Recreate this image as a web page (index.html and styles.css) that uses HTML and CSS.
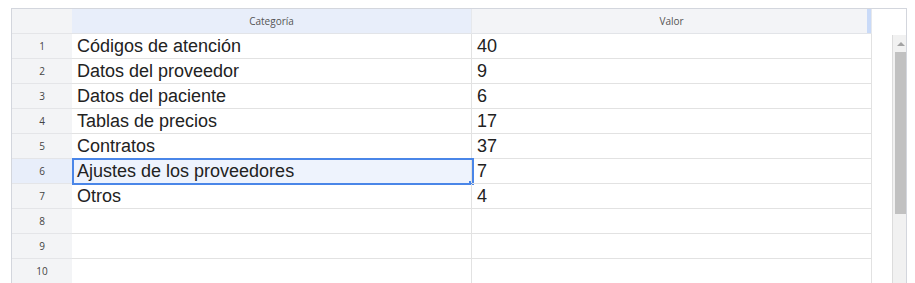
FILE: index.html
```html
<!DOCTYPE html>
<html>
<head lang="es">
    <meta charset="UTF-8">
    <title>Hoja de datos</title>
    <link rel="stylesheet" href="styles.css">
</head>
<body>
<div class="sheet">
    <div class="grid">
        <div class="corner"></div>
        <div class="colhead selected">Categoría</div>
        <div class="colhead last">Valor</div>

        <div class="rownum">1</div><div class="cell">Códigos de atención</div><div class="cell">40</div>
        <div class="rownum">2</div><div class="cell">Datos del proveedor</div><div class="cell">9</div>
        <div class="rownum">3</div><div class="cell">Datos del paciente</div><div class="cell">6</div>
        <div class="rownum">4</div><div class="cell">Tablas de precios</div><div class="cell">17</div>
        <div class="rownum">5</div><div class="cell">Contratos</div><div class="cell">37</div>
        <div class="rownum selected">6</div><div class="cell active">Ajustes de los proveedores</div><div class="cell">7</div>
        <div class="rownum">7</div><div class="cell">Otros</div><div class="cell">4</div>
        <div class="rownum">8</div><div class="cell"></div><div class="cell"></div>
        <div class="rownum">9</div><div class="cell"></div><div class="cell"></div>
        <div class="rownum">10</div><div class="cell"></div><div class="cell"></div>
    </div>
    <!-- barra de scroll -->
    <div class="side">
        <div class="vscroll">
            <div class="arrow"></div>
            <div class="thumb"></div>
        </div>
    </div>
</div>
</body>
</html>
```
FILE: styles.css
```css
* {
    margin: 0;
    padding: 0;
    box-sizing: border-box;
}
html, body {
    height: 283px;
    overflow: hidden;
    background: #fff;
}
body {
    padding: 8px 0 0 11px;
}
/*表格*/
.sheet {
    display: flex;
    width: 896px;
    border: 1px solid #d3d6dd;
    border-bottom: none;
}
.grid {
    display: grid;
    grid-template-columns: 60px 400px 400px;
    grid-auto-rows: 25px;
}
.corner, .rownum {
    background: #f3f4f6;
    border-bottom: 1px solid #e4e5e8;
}
.colhead {
    font: 10px/24px "Open Sans", "Noto Sans", sans-serif;
    color: #555;
    text-align: center;
    background: #f3f4f7;
    border-right: 1px solid #e6e8ec;
    border-bottom: 1px solid #e2e4e8;
}
.colhead.selected {
    background: #e8eefa;
}
.colhead.last {
    box-shadow: inset -4px 0 #c9daf8;
}
.rownum {
    font: 10px/24px "Open Sans", "Noto Sans", sans-serif;
    color: #444;
    text-align: center;
}
.rownum.selected {
    background: #e8eefa;
}
.cell {
    position: relative;
    font: 18px/24px "Liberation Sans", Arial, sans-serif;
    color: #222;
    padding-left: 5px;
    border-right: 1px solid #e2e2e2;
    border-bottom: 1px solid #e2e2e2;
    white-space: nowrap;
}
.cell.active {
    background: #eef3fd;
}
/*选中框*/
.cell.active::before {
    content: "";
    position: absolute;
    left: 0;
    top: -1px;
    width: 398px;
    height: 23px;
    border: 2px solid #4a86e8;
}
.cell.active::after {
    content: "";
    position: absolute;
    left: 397px;
    top: 22px;
    width: 2px;
    height: 2px;
    background: #4a86e8;
}
/*滚动条*/
.side {
    width: 34px;
    display: flex;
    justify-content: flex-end;
    padding-top: 26px;
}
.vscroll {
    width: 14px;
    height: 260px;
    background: #f1f1f1;
    border-left: 1px solid #dcdcdc;
    padding: 0 0 0 2px;
}
.arrow {
    height: 17px;
    display: flex;
    align-items: center;
    justify-content: center;
}
.arrow::before {
    content: "";
    border-left: 4px solid transparent;
    border-right: 4px solid transparent;
    border-bottom: 4px solid #a3a3a3;
}
.thumb {
    height: 162px;
    background: #c1c1c1;
}
```
